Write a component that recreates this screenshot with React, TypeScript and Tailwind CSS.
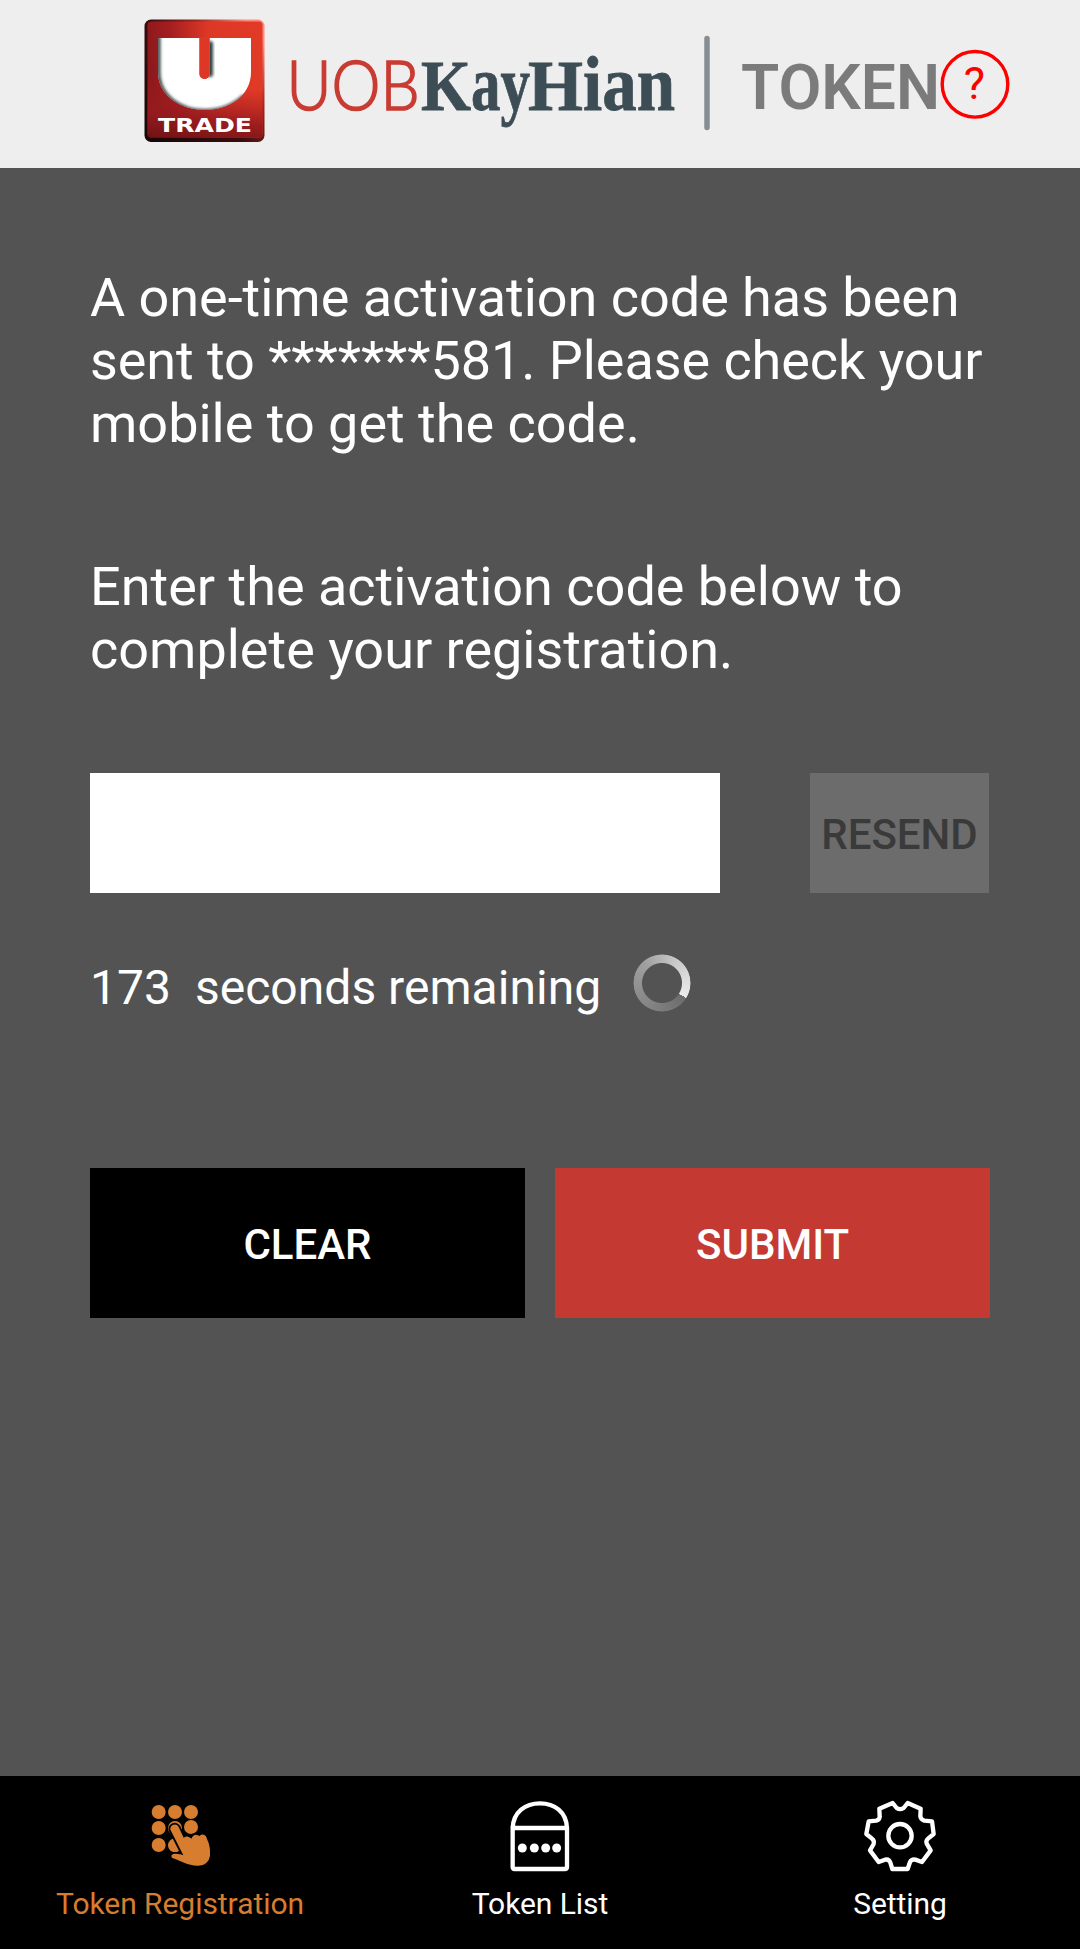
import type { ReactNode } from "react";

function Logo() {
  return (
    <svg viewBox="0 0 1080 168" className="h-[168px] w-[1080px]" role="img" aria-label="UTRADE UOBKayHian Token">
      <defs>
        <linearGradient id="tile" x1="0" y1="0.1" x2="1" y2="0">
          <stop offset="0" stopColor="#8e191c" />
          <stop offset="0.2" stopColor="#a51e20" />
          <stop offset="0.52" stopColor="#dd3726" />
          <stop offset="1" stopColor="#e13a27" />
        </linearGradient>
        <linearGradient id="rim" x1="0" y1="1" x2="1" y2="0.2">
          <stop offset="0" stopColor="#150607" />
          <stop offset="0.5" stopColor="#3a0c0e" />
          <stop offset="0.75" stopColor="#a02620" />
          <stop offset="1" stopColor="#ff8a78" />
        </linearGradient>
        <linearGradient id="shade" x1="0.1" y1="0" x2="0" y2="1">
          <stop offset="0" stopColor="#a01c1f" stopOpacity="0" />
          <stop offset="0.5" stopColor="#a01c1f" stopOpacity="0" />
          <stop offset="0.8" stopColor="#941a1e" stopOpacity="0.9" />
          <stop offset="1" stopColor="#6f1214" stopOpacity="0.95" />
        </linearGradient>
        <filter id="soft" x="-20%" y="-20%" width="140%" height="140%">
          <feGaussianBlur stdDeviation="1.6" />
        </filter>
        <clipPath id="uclip">
          <path d="M158 38H199.500V74a5 5 0 0 0 10 0V38H251V72C251 96 229 110 205 110S158 96 158 72Z" />
        </clipPath>
      </defs>
      <rect x="144.500" y="19.500" width="120" height="122.500" rx="6.500" fill="url(#rim)" />
      <rect x="147.500" y="21.500" width="115" height="116" rx="4" fill="url(#tile)" />
      <rect x="147.500" y="21.500" width="115" height="116" rx="4" fill="url(#shade)" />
      <g clipPath="url(#uclip)">
        <rect x="155" y="35" width="100" height="80" fill="#fff" />
        <path d="M158.500 36V72C158.500 96 180 111 205 111C222 111 236 104 244 96" fill="none" stroke="#3b4747" strokeWidth="4" filter="url(#soft)" />
        <rect x="207" y="41" width="6" height="36" rx="3" fill="#333f40" filter="url(#soft)" />
      </g>
      <path d="M199.500 37V74a5 5 0 0 0 10 0V37Z" fill="#de3726" />
      <text x="158" y="131.500" textLength="94" lengthAdjust="spacingAndGlyphs" fill="#fff" fontFamily="DejaVu Sans" fontWeight="700" fontSize="20">TRADE</text>

      <text x="286.500" y="110" textLength="133" lengthAdjust="spacingAndGlyphs" fill="#c83c33" stroke="#c83c33" strokeWidth="1.700" fontFamily="Lato" fontWeight="300" fontSize="68">UOB</text>
      <g fill="#3d4d55" stroke="#3d4d55" strokeWidth="0.800" fontFamily="Liberation Serif" fontWeight="700">
        <text x="421" y="110" textLength="50" lengthAdjust="spacingAndGlyphs" fontSize="72">K</text>
        <text x="471" y="110" textLength="59" lengthAdjust="spacingAndGlyphs" fontSize="79">ay</text>
        <text x="528" y="110" textLength="55" lengthAdjust="spacingAndGlyphs" fontSize="72">H</text>
        <text x="583" y="110" textLength="92" lengthAdjust="spacingAndGlyphs" fontSize="79">ian</text>
      </g>
      <path d="M707 38.500V127.500" stroke="#868e93" strokeWidth="5.500" strokeLinecap="round" />
      <text x="741" y="109" textLength="199" lengthAdjust="spacingAndGlyphs" fill="#7b7b7b" fontFamily="Roboto" fontWeight="600" fontSize="62.500">TOKEN</text>
      <circle cx="975" cy="84.300" r="32.800" fill="none" stroke="#f00" strokeWidth="3.400" />
      <text x="974.500" y="99" textAnchor="middle" fill="#f00" fontFamily="Roboto" fontSize="45">?</text>
    </svg>
  );
}

function KeypadIcon() {
  return (
    <svg viewBox="300 78 240 240" className="size-20" fill="currentColor">
      {[356, 405, 453].map((x) => <circle key={x} cx={x} cy="126" r="21" />)}
      <circle cx="356" cy="174" r="21" />
      <circle cx="405" cy="174" r="21" />
      <circle cx="453" cy="171" r="21" />
      <circle cx="356" cy="225" r="21" />
      <circle cx="405" cy="226" r="21" />
      <path
        d="M392 181C386 168 407 155 416 171L431 203Q436 199 444 200Q450 202 454 206Q458 195 467 194Q474 195 479 198Q483 193 491 194Q499 196 501 207Q512 229 510 257Q506 285 475 287C445 288 421 272 397 264C389 256 399 250 412 252Q421 252 430 256Z"
        stroke="#000"
        strokeWidth="11"
        paintOrder="stroke"
      />
    </svg>
  );
}

function TokenListIcon() {
  return (
    <svg viewBox="180 78 240 240" className="size-20" fill="none" stroke="currentColor" strokeWidth="13">
      <path d="M218 174C220 126 256 100 300 100S379 126 381 174V291Q381 297 375 297H224Q218 297 218 291V174H381" />
      <g fill="currentColor" stroke="none">
        {[247, 283, 317, 350].map((x) => <circle key={x} cx={x} cy="234" r="13.500" />)}
      </g>
    </svg>
  );
}

function GearIcon() {
  return (
    <svg viewBox="180 78 240 240" className="size-20" fill="none" stroke="currentColor" strokeWidth="13" strokeLinejoin="round">
      <path d="M278 99L290 114Q300 121 311 114L323 99L362 116L361 139Q363 149 373 152L396 154L401 192L384 206Q377 211 380 221L392 241L366 276L346 269Q335 267 330 276L323 297H277L271 278Q267 266 255 269L236 276L210 241L221 222Q224 212 216 206L199 192L206 154L229 152Q240 149 239 139L238 116Z" />
      <circle cx="300" cy="197" r="35" />
    </svg>
  );
}

function Tab({ icon, label, active = false }: { icon: ReactNode; label: string; active?: boolean }) {
  return (
    <button className={`flex flex-1 flex-col items-center gap-2.5 pt-5 ${active ? "text-[#d67d30]" : "text-white"}`}>
      {icon}
      <span className="text-[30px] leading-[35px] tracking-[-0.050px] whitespace-nowrap">{label}</span>
    </button>
  );
}

export default function App() {
  return (
    <div className="flex h-[1949px] w-[1080px] flex-col overflow-hidden bg-[#535353] font-['Roboto',sans-serif] text-white">
      <header className="h-[168px] shrink-0 bg-[#eeeeee]">
        <Logo />
      </header>

      <main className="flex flex-1 flex-col px-[90px] pt-[98px]">
        <p className="text-[54px] leading-[63px] whitespace-nowrap">
          <span className="tracking-[-0.030px]">A one-time activation code has been</span>
          <br />
          <span className="tracking-[-0.070px]">sent to *******581. Please check your</span>
          <br />
          mobile to get the code.
        </p>
        <p className="mt-[100px] text-[54px] leading-[63px] whitespace-nowrap">
          Enter the activation code below to
          <br />
          complete your registration.
        </p>

        <div className="mt-[92px] flex h-[120px] gap-[90px]">
          <input aria-label="Activation code" className="w-[630px] bg-white px-4 text-5xl text-black outline-none" />
          <button disabled className="w-[179px] bg-[#6c6c6c] pt-[3px] text-[42px] font-medium text-[#3a3a3a]">
            RESEND
          </button>
        </div>

        <div className="mt-[60px] flex h-[60px] items-center">
          <p className="pt-2.5 text-[48px] leading-[56px] tracking-[0.030px] whitespace-pre">173  seconds remaining</p>
          <div className="ml-8 size-[58px] rounded-full bg-[conic-gradient(from_122deg,#6c6c6c,#858585_25%,#a0a0a0_55%,#c9c9c9_75%,#ededed)] [mask:radial-gradient(circle,transparent_19.500px,#000_20.500px,#000_28px,transparent_29px)]" />
        </div>

        <div className="mt-[155px] flex h-[150px] gap-[30px] text-[42px] font-medium">
          <button className="flex-1 bg-black pt-[3px]">CLEAR</button>
          <button className="flex-1 bg-[#c43a33] pt-[3px]">SUBMIT</button>
        </div>
      </main>

      <nav className="flex h-[173px] shrink-0 bg-black">
        <Tab icon={<KeypadIcon />} label="Token Registration" active />
        <Tab icon={<TokenListIcon />} label="Token List" />
        <Tab icon={<GearIcon />} label="Setting" />
      </nav>
    </div>
  );
}
